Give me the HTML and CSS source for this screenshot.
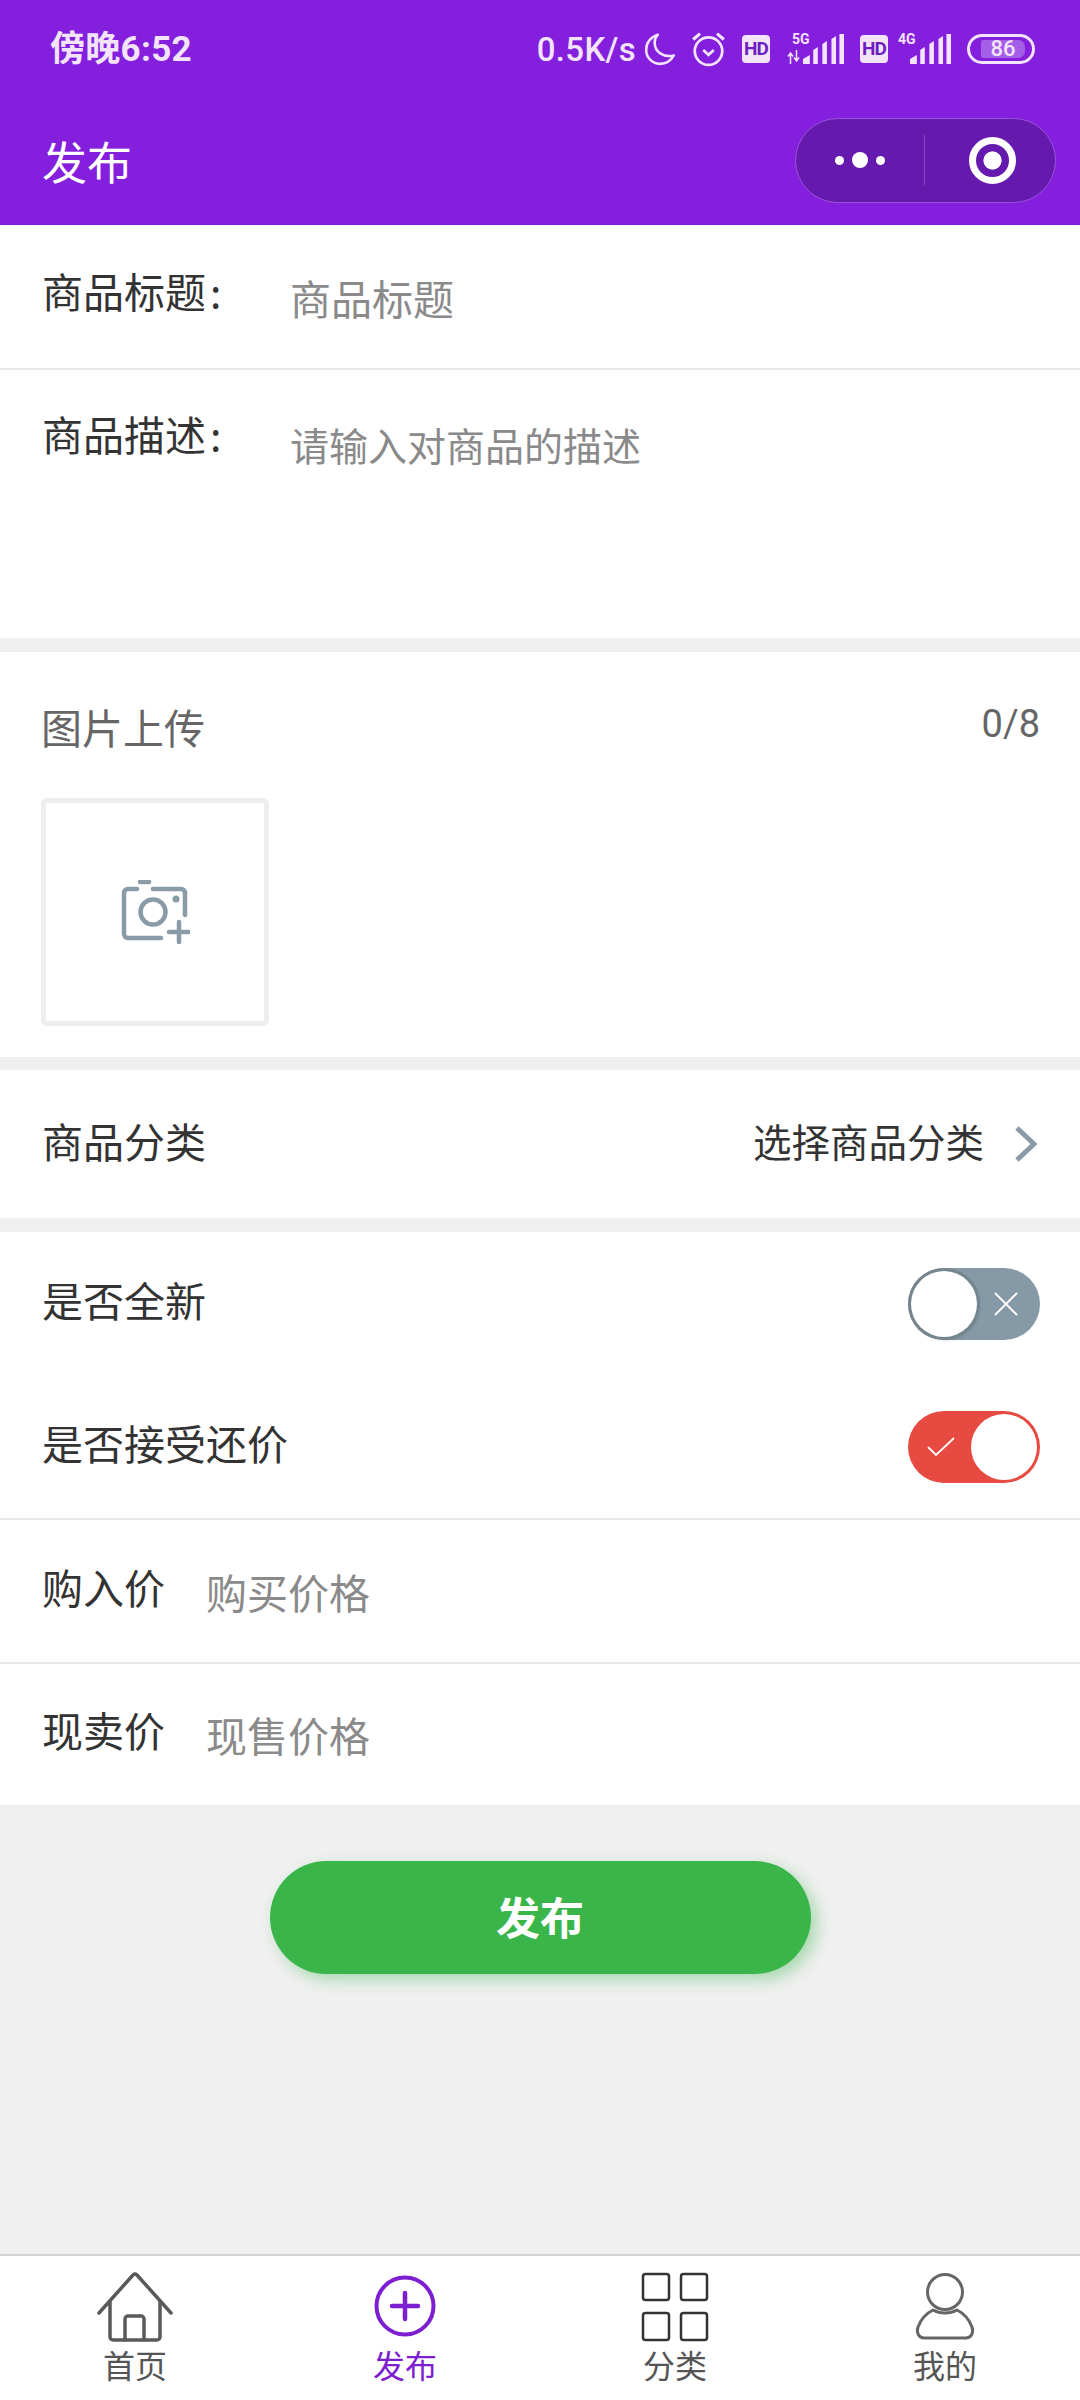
FILE: index.html
```html
<!DOCTYPE html>
<html lang="zh-CN">
<head>
<meta charset="utf-8">
<title>发布</title>
<link rel="stylesheet" href="styles.css">
</head>
<body>
<header class="top">
  <div class="status">
    <span class="time">傍晚6:52</span>
    <div class="status-right">
      <span class="speed">0.5K/s</span>
      <svg class="moon" viewBox="0 0 30 32"><path d="M13 2.500C6 5 2 10.500 2 17c0 7.500 6 13 13 13 6 0 10.500-3.500 13-8-9 2.500-18-3-18-12 0-3 1-5.500 3-7.500z" fill="none" stroke="#f3e4fb" stroke-width="2.400" stroke-linejoin="round"/></svg>
      <svg class="alarm" viewBox="0 0 32 34"><circle cx="16" cy="19" r="13" fill="none" stroke="#f3e4fb" stroke-width="2.600"/><path d="M11 18l5 4.500 5-4.500" fill="none" stroke="#f3e4fb" stroke-width="2.600"/><path d="M1.500 8L8 2.500M30.500 8L24 2.500" stroke="#f3e4fb" stroke-width="3"/></svg>
      <span class="hd">HD</span>
      <div class="sig sig5">
        <span class="net">5G</span>
        <svg class="arrows" viewBox="0 0 12 14"><path d="M3 14V4M0.500 6.500L3 3l2.500 3.500M9 0v10M6.500 7.500L9 11l2.500-3.500" fill="none" stroke="#f3e4fb" stroke-width="1.500"/></svg>
        <svg class="bars" viewBox="0 0 36 30" preserveAspectRatio="none"><path d="M0 30v-5l6-4v9zM9 30V16l4-3v17zM17 30V10l4-3v23zM25 30V5l4-3v28zM32 30V0h4v30z" fill="#f3e4fb"/></svg>
      </div>
      <span class="hd hd2">HD</span>
      <div class="sig sig4">
        <span class="net">4G</span>
        <svg class="bars" viewBox="0 0 36 30" preserveAspectRatio="none"><path d="M0 30v-5l6-4v9zM9 30V16l4-3v17zM17 30V10l4-3v23zM25 30V5l4-3v28zM32 30V0h4v30z" fill="#f3e4fb"/></svg>
      </div>
      <div class="battery"><span class="level">86</span></div>
    </div>
  </div>
  <div class="nav">
    <h1 class="title">发布</h1>
    <div class="capsule">
      <div class="dots"><i class="dot"></i><i class="dot big"></i><i class="dot"></i></div>
      <span class="sep"></span>
      <div class="target"></div>
    </div>
  </div>
</header>

<main class="main">
  <section class="field title-field">
    <label class="label">商品标题<span class="colon">:</span></label>
    <span class="hint hint-title">商品标题</span>
  </section>
  <section class="field desc-field">
    <label class="label">商品描述<span class="colon">:</span></label>
    <span class="hint hint-desc">请输入对商品的描述</span>
  </section>

  <section class="upload">
    <div class="upload-head"><span class="upload-name">图片上传</span><span class="upload-count">0/8</span></div>
    <div class="upload-box">
      <svg class="camera" viewBox="0 0 70 64"><g fill="none" stroke="#8a9ba8" stroke-width="4.500" stroke-linecap="round" stroke-linejoin="round"><path d="M17 9H8a4 4 0 0 0-4 4v41a4 4 0 0 0 4 4h33"/><path d="M33 9h28a4 4 0 0 1 4 4v22"/><path d="M20 2h9"/><circle cx="33" cy="32" r="12.500"/><path d="M49 52h20M59 42v20"/></g><circle cx="56" cy="19" r="3.500" fill="#8a9ba8"/></svg>
    </div>
  </section>

  <section class="row cat">
    <span class="row-label">商品分类</span>
    <div class="pick"><span class="pick-text">选择商品分类</span>
      <svg class="chev" viewBox="0 0 22 36"><path d="M2 2l17 16L2 34" fill="none" stroke="#8a9ba8" stroke-width="5"/></svg>
    </div>
  </section>

  <section class="switches">
    <div class="row sw-row">
      <span class="row-label">是否全新</span>
      <div class="switch off">
        <span class="knob"></span>
        <svg class="sw-icon" viewBox="0 0 24 24"><path d="M1 1l22 22M23 1L1 23" stroke="#fff" stroke-width="1.800"/></svg>
      </div>
    </div>
    <div class="row sw-row">
      <span class="row-label">是否接受还价</span>
      <div class="switch on">
        <svg class="sw-icon" viewBox="0 0 28 20"><path d="M1 10l8 8L27 1" fill="none" stroke="#fff" stroke-width="1.800"/></svg>
        <span class="knob"></span>
      </div>
    </div>
  </section>

  <section class="price first">
    <span class="row-label">购入价</span><span class="hint">购买价格</span>
  </section>
  <section class="price second">
    <span class="row-label">现卖价</span><span class="hint">现售价格</span>
  </section>

  <div class="submit-wrap"><button class="submit">发布</button></div>
</main>

<nav class="tabs">
  <a class="tab">
    <svg class="tab-icon" viewBox="0 0 76 72"><g fill="none" stroke="#5a5a5a" stroke-width="3.500" stroke-linecap="round" stroke-linejoin="round"><path d="M2 41L36 3a3 3 0 0 1 4 0l34 38"/><path d="M13 30v35a3 3 0 0 0 3 3h44a3 3 0 0 0 3-3V30"/><path d="M28 68V47a3 3 0 0 1 3-3h13a3 3 0 0 1 3 3v21"/></g></svg>
    <span class="tab-text">首页</span>
  </a>
  <a class="tab active">
    <svg class="tab-icon" viewBox="0 0 76 72"><g fill="none" stroke="#7d1fd0" stroke-linecap="round"><circle cx="38" cy="34" r="28.500" stroke-width="4"/><path d="M25 34h26M38 21v26" stroke-width="4.500"/></g></svg>
    <span class="tab-text">发布</span>
  </a>
  <a class="tab">
    <svg class="tab-icon" viewBox="0 0 76 72"><g fill="none" stroke="#333" stroke-width="2.500"><rect x="6" y="2" width="26" height="26" rx="2.500"/><rect x="44" y="2" width="26" height="26" rx="2.500"/><rect x="6" y="41" width="26" height="27" rx="2.500"/><rect x="44" y="41" width="26" height="27" rx="2.500"/></g></svg>
    <span class="tab-text">分类</span>
  </a>
  <a class="tab">
    <svg class="tab-icon" viewBox="0 0 76 72"><g fill="none" stroke="#666" stroke-width="3"><circle cx="38" cy="20" r="17.500"/><path d="M26 38c7 4 17 4 24 0 6 3 12 9 15 17 2 6-1 11-6 11H17c-5 0-8-5-6-11 3-8 9-14 15-17z" stroke-linejoin="round"/></g></svg>
    <span class="tab-text">我的</span>
  </a>
</nav>
</body>
</html>
```
FILE: styles.css
```css
* { box-sizing: border-box; margin: 0; padding: 0; }
html, body { width: 1080px; height: 2400px; overflow: hidden; }
body {
  display: flex;
  flex-direction: column;
  background: #f0f0f0;
  font-family: "Noto Sans CJK SC", "Noto Sans", sans-serif;
  color: #333;
}

/* Header */
.top { background: #831fdd; height: 225px; flex: none; }
.status {
  height: 98px;
  display: flex;
  align-items: center;
  justify-content: space-between;
  padding: 0 45px 0 50px;
  color: #f3e4fb;
}
.time { font: 700 35px/1 "Roboto", "Noto Sans CJK SC", sans-serif; letter-spacing: .3px; }
.status-right { display: flex; align-items: center; }
.speed { font: 500 33px/1 "Roboto", sans-serif; margin-right: 7px; letter-spacing: .3px; }
.moon { width: 34px; height: 34px; margin-right: 14px; }
.alarm { width: 35px; height: 36px; margin-right: 16px; }
.hd {
  width: 28px; height: 28px;
  border-radius: 4px;
  background: #f3e4fb;
  color: #6d1ec0;
  font: 700 19px/28px "Roboto", sans-serif;
  text-align: center;
  letter-spacing: -1px;
  margin-right: 17px;
}
.hd2 { margin-left: 16px; margin-right: 10px; }
.sig { position: relative; height: 30px; display: flex; align-items: flex-end; justify-content: flex-end; }
.sig5 { width: 57px; }
.sig4 { width: 53px; }
.bars { width: 41px; height: 30px; }
.net { position: absolute; left: 5px; top: -2px; font: 700 14px/1 "Roboto", sans-serif; }
.sig4 .net { left: 0; }
.arrows { position: absolute; left: 0; bottom: 0; width: 13px; height: 14px; }
.battery {
  width: 68px; height: 30px;
  margin-left: 16px;
  border: 3px solid #f3e4fb;
  border-radius: 15px;
  padding: 3px 7px 3px 11px;
  display: flex;
}
.level {
  flex: 1;
  background: #a45fe6;
  border-radius: 2px 7px 7px 2px;
  color: #f3e4fb;
  font: 500 22px/18px "Roboto", sans-serif;
  text-align: center;
}
.nav {
  height: 127px;
  display: flex;
  align-items: center;
  justify-content: space-between;
  padding: 0 24px 0 42px;
}
.title { font-weight: 400; font-size: 45px; line-height: 1; color: #fff; margin-top: -3px; }
.capsule {
  width: 261px; height: 85px;
  margin-top: -3px;
  background: #651aad;
  border: 1px solid #9a52dd;
  border-radius: 43px;
  display: flex;
  align-items: center;
}
.dots { width: 128px; display: flex; justify-content: center; align-items: center; gap: 8px; }
.dot { width: 9px; height: 9px; border-radius: 50%; background: #fff; display: block; }
.dot.big { width: 16px; height: 16px; }
.sep { width: 1px; height: 50px; background: #8a45cc; }
.target {
  width: 47px; height: 47px;
  margin-left: 44px;
  border: 7px solid #fff;
  border-radius: 50%;
  background: radial-gradient(closest-side, #fff 53%, #651aad 57%);
}

/* Main */
.main { flex: 1; display: flex; flex-direction: column; }
.field { background: #fff; display: flex; padding-left: 42px; border-bottom: 2px solid #e8e8e8; }
.title-field { height: 145px; padding-top: 36px; }
.desc-field { height: 268px; padding-top: 34px; border-bottom: 0; }
.label { width: 248px; font-size: 41px; line-height: 58px; color: #333; flex: none; }
.colon { margin-left: 4px; }
.hint { font-size: 41px; line-height: 58px; color: #8a8a8a; }
.hint-title { margin-top: 7px; }
.hint-desc { margin-top: 11px; font-size: 39px; }

.upload { background: #fff; margin-top: 14px; height: 405px; padding: 0 40px 0 41px; }
.upload-head { display: flex; justify-content: space-between; align-items: center; height: 146px; }
.upload-name { font-size: 41px; color: #666; margin-top: 1px; }
.upload-count { font: 400 38px/1 "Roboto", sans-serif; color: #666; margin-bottom: 2px; }
.upload-box {
  width: 228px; height: 228px;
  border: 5px solid #eee;
  border-radius: 6px;
  display: flex;
  align-items: center;
  justify-content: center;
}
.camera { width: 70px; height: 64px; }

.row { display: flex; align-items: center; justify-content: space-between; background: #fff; padding: 0 40px 0 42px; }
.row-label { font-size: 41px; color: #333; line-height: 58px; }
.cat .row-label, .sw-row .row-label { margin-bottom: 9px; }
.cat { margin-top: 13px; height: 148px; padding-right: 43px; }
.pick { display: flex; align-items: center; }
.pick-text { font-size: 38.500px; color: #333; line-height: 58px; margin-bottom: 9px; }
.chev { width: 22px; height: 36px; margin-left: 31px; }

.switches { margin-top: 14px; background: #fff; height: 288px; border-bottom: 2px solid #e8e8e8; }
.sw-row { height: 143px; }
.switch { width: 132px; height: 72px; border-radius: 36px; display: flex; align-items: center; padding: 3px; }
.knob { width: 66px; height: 66px; border-radius: 50%; background: #fff; display: block; flex: none; }
.off { background: #8699a6; justify-content: flex-start; }
.off .knob { box-shadow: 0 0 0 3px #74858f, 1px 2px 4px rgba(0,0,0,.25); }
.off .sw-icon { width: 24px; height: 24px; margin-left: 17px; }
.on { background: #e64a40; justify-content: space-between; }
.on .sw-icon { width: 28px; height: 20px; margin-left: 16px; }

.price { background: #fff; height: 144px; display: flex; align-items: flex-start; padding: 37px 0 0 42px; border-bottom: 2px solid #e8e8e8; }
.price .row-label { width: 164px; flex: none; }
.price .hint { margin-top: 5px; }
.second { height: 141px; padding-top: 36px; border-bottom: 0; }

.submit-wrap { display: flex; justify-content: center; padding-top: 56px; }
.submit {
  width: 541px; height: 113px;
  border: 0;
  border-radius: 57px;
  padding-bottom: 4px;
  background: #39b54a;
  color: #fff;
  font: 700 44px/1 "Noto Sans CJK SC", sans-serif;
  box-shadow: 6px 6px 16px rgba(57,181,74,.4);
}

/* Tabs */
.tabs { flex: none; height: 146px; background: #fff; border-top: 2px solid #d4d4d4; display: flex; }
.tab { flex: 1; display: flex; flex-direction: column; align-items: center; color: #555; padding-top: 16px; }
.tab-icon { width: 76px; height: 72px; display: block; }
.tab-text { font-size: 32px; line-height: 40px; }
.active { color: #7d1fd0; }
```
